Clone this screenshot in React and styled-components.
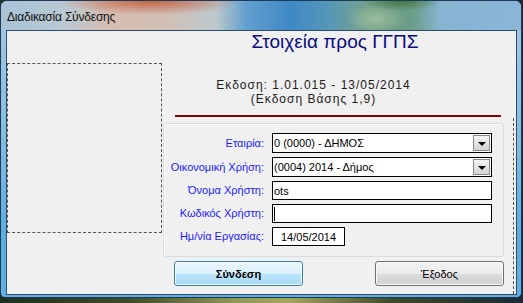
import React from 'react';
import styled, { createGlobalStyle } from 'styled-components';

const Global = createGlobalStyle`
  html, body {
    margin: 0;
    padding: 0;
  }
  body {
    width: 523px;
    height: 303px;
    overflow: hidden;
    background: linear-gradient(90deg, #1d2f24 0%, #3e4c2c 25%, #8c9a56 45%, #a4a860 55%, #3c4a2c 75%, #1b2a36 100%);
    font-family: "Liberation Sans", Arial, sans-serif;
  }
`;

const Window = styled.div`
  width: 522px;
  height: 298px;
  box-sizing: border-box;
  border: 1px solid #1e3a56;
  border-radius: 7px 7px 5px 5px;
  overflow: hidden;
  display: flex;
  flex-direction: column;
  background: linear-gradient(180deg, #a4c8e4 0%, #86bde2 45%, #5aaddf 80%, #62b0de 100%);
`;

const TitleBar = styled.div`
  height: 29px;
  flex: none;
  display: flex;
  align-items: center;
  padding-left: 6px;
  padding-top: 2px;
  box-sizing: border-box;
  background:
    radial-gradient(ellipse 90px 14px at 150px 0px, rgba(190, 70, 30, 0.75), rgba(190, 70, 30, 0) 100%),
    radial-gradient(ellipse 40px 10px at 400px 0px, rgba(60, 110, 50, 0.8), rgba(60, 110, 50, 0) 100%),
    radial-gradient(ellipse 30px 14px at 375px 18px, rgba(170, 200, 160, 0.7), rgba(170, 200, 160, 0) 100%),
    linear-gradient(90deg, #a8c2d6 0px, #b8c9d4 60px, #d7bcb0 110px, #d0c0b8 170px, #bcc8cc 215px, #639fcf 245px, #3e88c5 290px, #5798b6 330px, #76a28e 365px, #6a9c86 410px, #88b4d2 440px, #8ab5d7 521px);
`;

const Title = styled.span`
  font-family: "Liberation Sans", Arial, sans-serif;
  font-size: 12px;
  letter-spacing: -0.2px;
  color: #101010;
`;

const Frame = styled.div`
  flex: 1;
  padding: 0 4px 2px 5px;
  display: flex;
`;

const Client = styled.div`
  flex: 1;
  height: 265px;
  box-sizing: border-box;
  border: 1px solid #2c4c6a;
  background: #f0f0f0;
  display: grid;
  grid-template-columns: 155px 351px 1fr;
`;

const LogoArea = styled.div`
  margin-top: 32px;
  height: 170px;
  box-sizing: border-box;
  border: 1px dashed #555;
`;

const Main = styled.div`
  display: flex;
  flex-direction: column;
  align-items: flex-start;
`;

const Heading = styled.div`
  align-self: stretch;
  text-align: center;
  padding-right: 5px;
  font-size: 19px;
  line-height: 22px;
  color: #0a0a80;
`;

const Version = styled.div`
  align-self: stretch;
  margin-top: 25px;
  padding-right: 48px;
  text-align: center;
  font-size: 12px;
  line-height: 14px;
  color: #1a1a1a;
  letter-spacing: 1px;
`;

const Rule = styled.div`
  margin: 9px 0 0 13px;
  width: 326px;
  height: 2px;
  background: #850000;
`;

const Group = styled.div`
  margin: 6px 0 0 1px;
  width: 341px;
  height: 134px;
  box-sizing: border-box;
  border: 1px solid #d4dde6;
  border-radius: 3px;
  box-shadow: inset 1px 1px 0 #fbfbfb;
  padding: 9px 0 0 0;
  display: grid;
  grid-template-columns: 100px 220px;
  align-content: start;
  column-gap: 8px;
  row-gap: 4px;
  align-items: center;
`;

const Label = styled.label`
  text-align: right;
  font-size: 11px;
  line-height: 13px;
  color: #1a1aff;
  white-space: nowrap;
`;

const Field = styled.div`
  height: ${({ tall }) => (tall ? 20 : 19)}px;
  width: ${({ w }) => w || 220}px;
  box-sizing: border-box;
  border: 1px solid #000;
  background: #fff;
  display: flex;
  align-items: center;
  padding-left: ${({ pad }) => pad || 1}px;
  font-size: 11px;
  color: #000;
  position: relative;
`;

const Caret = styled.span`
  width: 1px;
  height: 14px;
  background: #000;
`;

const DropButton = styled.div`
  position: absolute;
  right: 1px;
  top: 1px;
  width: 17px;
  height: 16px;
  box-sizing: border-box;
  border: 1px solid #8a8a8a;
  background: linear-gradient(180deg, #f4f4f4 0%, #e4e4e4 50%, #d6d6d6 100%);
  display: flex;
  align-items: center;
  justify-content: center;
`;

const Arrow = styled.span`
  width: 0;
  height: 0;
  border-left: 4px solid transparent;
  border-right: 4px solid transparent;
  border-top: 4px solid #000;
  margin-top: 1px;
`;

const Buttons = styled.div`
  margin: 4px 0 0 12px;
  display: flex;
  gap: 72px;
`;

const Button = styled.button`
  width: 129px;
  height: 25px;
  box-sizing: border-box;
  border-radius: 3px;
  font-family: "Liberation Sans", Arial, sans-serif;
  font-size: 11px;
  font-weight: ${({ primary }) => (primary ? 700 : 400)};
  color: #000;
  padding: 0;
  border: 1px solid ${({ primary }) => (primary ? '#3c7fb1' : '#707070')};
  box-shadow: inset 0 0 0 1px ${({ primary }) => (primary ? '#f2faff' : '#fbfbfb')};
  background: ${({ primary }) =>
    primary
      ? 'linear-gradient(180deg, #eaf6fd 0%, #d9f0fc 50%, #bee6fd 51%, #a7d9f5 100%)'
      : 'linear-gradient(180deg, #f2f2f2 0%, #ebebeb 50%, #dddddd 51%, #cfcfcf 100%)'};
`;

const Strip = styled.div`
  margin-top: 87px;
  border-left: 1px dashed #555;
`;

function Combo({ children }) {
  return (
    <Field tall>
      {children}
      <DropButton>
        <Arrow />
      </DropButton>
    </Field>
  );
}

export default function App() {
  return (
    <>
      <Global />
      <Window>
        <TitleBar>
          <Title>Διαδικασία Σύνδεσης</Title>
        </TitleBar>
        <Frame>
          <Client>
            <LogoArea />
            <Main>
              <Heading>Στοιχεία προς ΓΓΠΣ</Heading>
              <Version>
                Εκδοση: 1.01.015 - 13/05/2014
                <br />
                (Εκδοση Βάσης 1,9)
              </Version>
              <Rule />
              <Group>
                <Label>Εταιρία:</Label>
                <Combo>0 (0000) - ΔΗΜΟΣ</Combo>
                <Label>Οικονομική Χρήση:</Label>
                <Combo>(0004) 2014 - Δήμος</Combo>
                <Label>Όνομα Χρήστη:</Label>
                <Field>ots</Field>
                <Label>Κωδικός Χρήστη:</Label>
                <Field>
                  <Caret />
                </Field>
                <Label>Ημ/νία Εργασίας:</Label>
                <Field w={73} pad={8}>
                  14/05/2014
                </Field>
              </Group>
              <Buttons>
                <Button primary>Σύνδεση</Button>
                <Button>Έξοδος</Button>
              </Buttons>
            </Main>
            <Strip />
          </Client>
        </Frame>
      </Window>
    </>
  );
}
